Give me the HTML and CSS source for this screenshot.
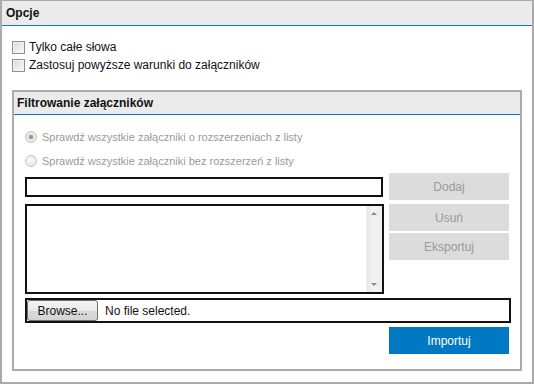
FILE: index.html
```html
<!DOCTYPE html>
<html lang="pl">
<head>
<meta charset="utf-8">
<title>Opcje</title>
<link rel="stylesheet" href="styles.css">
</head>
<body>
<div class="panel">
  <div class="panel-head">Opcje</div>
  <div class="panel-body">
    <label class="check-row"><input type="checkbox" class="chk"><span>Tylko całe słowa</span></label>
    <label class="check-row"><input type="checkbox" class="chk"><span>Zastosuj powyższe warunki do załączników</span></label>
    <section class="group">
      <div class="group-head">Filtrowanie załączników</div>
      <div class="group-body">
        <label class="radio-row"><input type="radio" name="m" class="rad" checked disabled><span>Sprawdź wszystkie załączniki o rozszerzeniach z listy</span></label>
        <label class="radio-row"><input type="radio" name="m" class="rad" disabled><span>Sprawdź wszystkie załączniki bez rozszerzeń z listy</span></label>
        <div class="grid">
          <input type="text" class="txt">
          <button class="btn" disabled>Dodaj</button>
          <div class="listbox">
            <div class="list-area"></div>
            <div class="scrollbar">
              <span class="arrow up"></span>
              <span class="arrow down"></span>
            </div>
          </div>
          <div class="btn-stack">
            <button class="btn" disabled>Usuń</button>
            <button class="btn" disabled>Eksportuj</button>
          </div>
          <div class="file-row">
            <span class="browse">Browse...</span>
            <span class="file-name">No file selected.</span>
          </div>
          <button class="btn primary">Importuj</button>
        </div>
      </div>
    </section>
  </div>
</div>
</body>
</html>
```

FILE: styles.css
```css
* { box-sizing: border-box; }
html, body { margin: 0; padding: 0; background: #fff; }
body {
  font-family: "Liberation Sans", Arial, sans-serif;
  font-size: 12px;
  color: #111;
}
.panel {
  width: 534px;
  height: 384px;
  border: 2px solid #ababab;
  border-top-width: 1px;
  background: #fff;
}
.panel-head {
  height: 25px;
  background: #ebebeb;
  border-bottom: 1px solid #0a78c8;
  padding-left: 4px;
  font-weight: bold;
  line-height: 24px;
}
.panel-body {
  padding: 12px 10px 0 10px;
}
.check-row {
  display: flex;
  align-items: center;
  height: 18px;
}
.chk {
  -webkit-appearance: none;
  appearance: none;
  width: 13px;
  height: 13px;
  margin: 0 4px 0 0;
  border: 1px solid #8f8f8f;
  background: linear-gradient(135deg, #d6d6d6 0%, #eeeeee 60%, #f8f8f8 100%);
  box-shadow: inset 0 0 0 1px #f4f4f4;
}
.group {
  margin-top: 16px;
  width: 510px;
  border: 2px solid #ababab;
}
.group-head {
  height: 23px;
  background: #ebebeb;
  border-bottom: 1px solid #0a78c8;
  padding-left: 3px;
  font-weight: bold;
  line-height: 22px;
}
.group-body {
  padding: 10px 11px 15px 11px;
}
.radio-row {
  display: flex;
  align-items: center;
  height: 24px;
  color: #9a9a9a;
  font-size: 11px;
}
.rad {
  -webkit-appearance: none;
  appearance: none;
  width: 12px;
  height: 12px;
  margin: 0 5px 0 0;
  border-radius: 50%;
  border: 1px solid #c4c4c4;
  background: radial-gradient(circle at 40% 40%, #fafafa 0%, #e4e4e4 100%);
}
.rad:checked {
  background: radial-gradient(circle, #8a8a8a 0%, #a6a6a6 28%, #e6e6e6 36%, #f2f2f2 100%);
}
.grid {
  display: grid;
  grid-template-columns: 359px 120px;
  grid-template-rows: 27px 90px 25px 27px;
  column-gap: 5px;
  row-gap: 4px;
}
.txt {
  align-self: center;
  width: 358px;
  height: 20px;
  margin: 0;
  border: 2px solid #111;
  padding: 0 3px;
  font: inherit;
}
.btn {
  height: 27px;
  margin: 0;
  border: 0;
  background: #dcdcdc;
  color: #9a9a9a;
  font: inherit;
  font-size: 12px;
  padding: 0;
}
.btn.primary {
  background: #0079c2;
  color: #fff;
}
.btn-stack {
  display: flex;
  flex-direction: column;
  gap: 2px;
}
.listbox {
  display: flex;
  border: 2px solid #111;
  background: #fff;
}
.list-area { flex: 1; }
.scrollbar {
  position: relative;
  width: 16px;
  background: linear-gradient(to right, #e6e6e6, #f3f3f3 40%, #ededed);
  border-left: 1px solid #f0f0f0;
}
.arrow {
  position: absolute;
  left: 4px;
  width: 0;
  height: 0;
  border-left: 3px solid transparent;
  border-right: 3px solid transparent;
}
.arrow.up {
  top: 6px;
  border-bottom: 3px solid #8a8a8a;
}
.arrow.down {
  bottom: 6px;
  border-top: 3px solid #8a8a8a;
}
.file-row {
  grid-column: 1 / 3;
  width: 486px;
  display: flex;
  align-items: center;
  border: 2px solid #111;
  padding-left: 0;
}
.browse {
  width: 71px;
  height: 21px;
  margin-left: 0;
  border: 1px solid #707070;
  border-radius: 3px;
  background: linear-gradient(#f4f4f4, #e9e9e9 50%, #dadada 51%, #d4d4d4);
  display: flex;
  align-items: center;
  justify-content: center;
  color: #111;
}
.file-name {
  margin-left: 7px;
  color: #111;
}
.primary { grid-column: 2; }
```
